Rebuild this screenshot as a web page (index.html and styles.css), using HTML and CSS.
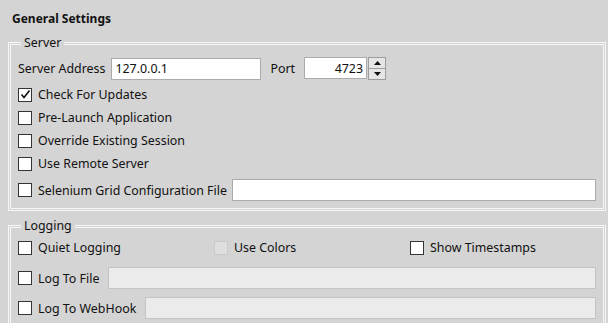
FILE: index.html
```html
<!DOCTYPE html>
<html lang="en">
<head>
<meta charset="UTF-8">
<title>General Settings</title>
<link rel="stylesheet" href="styles.css">
</head>
<body>
<h1 class="title">General Settings</h1>

<fieldset class="group server">
    <legend>Server</legend>
    <div class="row first">
        <span class="label">Server Address</span>
        <input class="field address" type="text" value="127.0.0.1">
        <span class="label port-label">Port</span>
        <div class="spin">
            <input class="field port" type="text" value="4723">
            <div class="spin-buttons">
                <span class="spin-btn"><svg width="7" height="4" viewBox="0 0 7 4"><path d="M0 4 L3.5 0 L7 4 Z" fill="#111"/></svg></span>
                <span class="spin-btn"><svg width="7" height="4" viewBox="0 0 7 4"><path d="M0 0 L3.5 4 L7 0 Z" fill="#111"/></svg></span>
            </div>
        </div>
    </div>
    <div class="row"><span class="check checked"><svg width="11" height="11" viewBox="0 0 11 11"><path d="M1.5 5.5 L4 8.5 L9.5 1.5" fill="none" stroke="#111" stroke-width="1.6"/></svg></span>Check For Updates</div>
    <div class="row"><span class="check"></span>Pre-Launch Application</div>
    <div class="row"><span class="check"></span>Override Existing Session</div>
    <div class="row"><span class="check"></span>Use Remote Server</div>
    <div class="row tall">
        <span class="check"></span>Selenium Grid Configuration File
        <input class="field grow grid-file" type="text">
    </div>
</fieldset>

<fieldset class="group logging">
    <legend>Logging</legend>
    <div class="row options">
        <span class="opt quiet"><span class="check"></span>Quiet Logging</span>
        <span class="opt colors"><span class="check disabled"></span>Use Colors</span>
        <span class="opt"><span class="check"></span>Show Timestamps</span>
    </div>
    <div class="row tall">
        <span class="check"></span>Log To File
        <input class="field grow" type="text" disabled>
    </div>
    <div class="row tall">
        <span class="check"></span>Log To WebHook
        <input class="field grow" type="text" disabled>
    </div>
</fieldset>
</body>
</html>
```

FILE: styles.css
```css
body {
    margin: 0;
    background-color: #d4d4d4;
    font-family: "Noto Sans", "Open Sans", sans-serif;
    font-size: 12.4px;
    color: #111;
}
.title {
    font-size: 12px;
    font-weight: bold;
    margin: 0;
    padding: 10px 12px 0;
    height: 25px;
}
.group {
    margin: 0 2px 0 8px;
    padding: 5px 7px 3px 7px;
    border: 3px double #f7f7f7;
}
.group legend {
    padding: 0 3px;
    margin-left: 3px;
    line-height: 16px;
}
.logging {
    margin-top: 7px;
    padding-top: 2px;
}
.row {
    display: flex;
    align-items: center;
    height: 23px;
    white-space: nowrap;
}
.row.first {
    height: 25px;
    margin-bottom: 2px;
}
.row.tall {
    height: 30px;
}
.row.options {
    margin-bottom: 4px;
}
.label {
    margin-right: 6px;
}
.port-label {
    margin-left: 9px;
    margin-right: 9px;
}
.field {
    height: 22px;
    box-sizing: border-box;
    border: 1px solid #ababab;
    background: #fff;
    font-family: inherit;
    font-size: 12.4px;
    padding: 0 3px;
    color: #111;
    outline: none;
}
.field:disabled {
    background: #ebebeb;
    border-color: #c4c4c4;
}
.address {
    width: 150px;
}
.spin {
    display: flex;
}
.port {
    width: 63px;
    text-align: right;
}
.spin-buttons {
    display: flex;
    flex-direction: column;
    margin-left: 1px;
}
.spin-btn {
    width: 16px;
    height: 10px;
    border: 1px solid #9c9c9c;
    background: #e6e6e6;
    display: flex;
    align-items: center;
    justify-content: center;
}
.spin-btn + .spin-btn {
    border-top: none;
}
.check {
    width: 12px;
    height: 12px;
    border: 1px solid #333;
    background: #fff;
    margin-right: 6px;
    display: inline-flex;
    align-items: center;
    justify-content: center;
    flex-shrink: 0;
}
.check.disabled {
    border-color: #c9c9c9;
    background: #dedede;
}
.grow {
    flex: 1;
    margin-left: 9px;
}
.grid-file {
    margin-left: 5px;
}
.opt {
    display: flex;
    align-items: center;
}
.quiet {
    width: 196px;
}
.colors {
    width: 196px;
}
```
